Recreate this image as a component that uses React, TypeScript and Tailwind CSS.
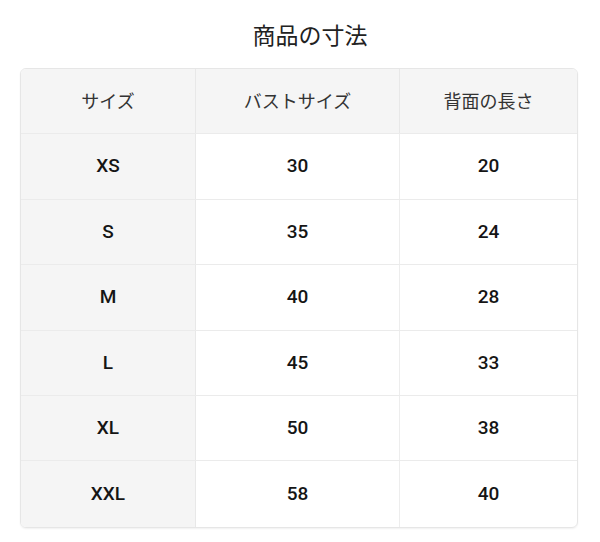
const rows: [string, string, string][] = [
  ["XS", "30", "20"],
  ["S", "35", "24"],
  ["M", "40", "28"],
  ["L", "45", "33"],
  ["XL", "50", "38"],
  ["XXL", "58", "40"],
];

const font = { fontFamily: '"Roboto", "Noto Sans CJK JP", "Noto Sans", sans-serif' };

export default function App() {
  return (
    <div className="w-[600px] h-[542px] bg-white" style={font}>
      <h2 className="pt-[22px] text-center text-[23px] leading-[30px] text-[#222] font-normal pl-[20px]">
        商品の寸法
      </h2>
      <div className="mt-[16px] ml-[20px] w-[558px] rounded-[6px] border border-[#e6e6e6] overflow-hidden shadow-[0_1px_2px_rgba(0,0,0,0.06)]">
        <div className="grid grid-cols-[175px_204px_1fr] h-[65.4px] bg-[#f5f5f5] border-b border-[#ebebeb] text-[18px] text-[#333]">
          <div className="flex items-center justify-center border-r border-[#e8e8e8]">サイズ</div>
          <div className="flex items-center justify-center border-r border-[#e8e8e8]">バストサイズ</div>
          <div className="flex items-center justify-center">背面の長さ</div>
        </div>
        {rows.map((r, i) => (
          <div
            key={r[0]}
            className={`grid grid-cols-[175px_204px_1fr] h-[65.4px] text-[19px] font-medium text-[#151515] ${
              i < rows.length - 1 ? "border-b border-[#ebebeb]" : ""
            }`}
          >
            <div className="flex items-center justify-center bg-[#f5f5f5] border-r border-[#e8e8e8]">{r[0]}</div>
            <div className="flex items-center justify-center border-r border-[#ededed]">{r[1]}</div>
            <div className="flex items-center justify-center">{r[2]}</div>
          </div>
        ))}
      </div>
    </div>
  );
}
